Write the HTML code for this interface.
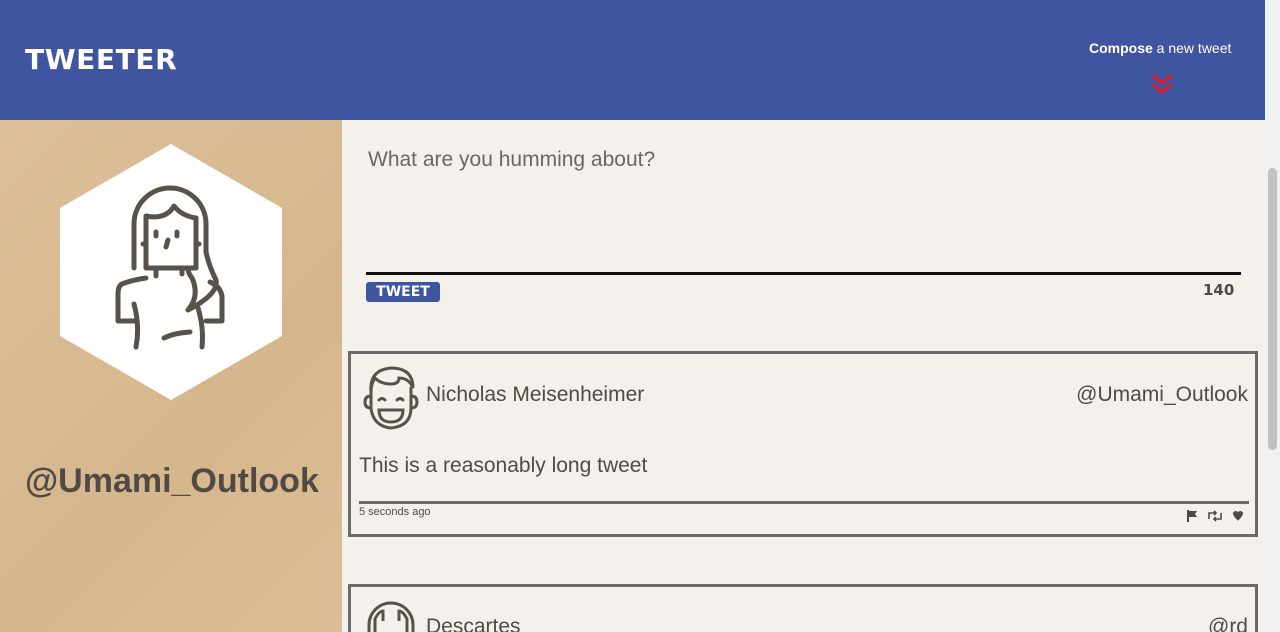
<!DOCTYPE html>
<html><head><meta charset="utf-8"><style>
*{margin:0;padding:0;box-sizing:border-box}
html,body{width:1280px;height:632px;overflow:hidden}
body{background:#f4f1ec;font-family:"Liberation Sans",sans-serif;color:#4f4a44}
#w{position:relative;width:1280px;height:632px;overflow:hidden}
.hdr{position:absolute;left:0;top:0;width:1265px;height:120px;background:#4055a0}
.logo{position:absolute;left:25px;top:43px;color:#fff;font:900 28px "DejaVu Sans",sans-serif;letter-spacing:0.6px}
.comp{position:absolute;left:1089px;top:40px;color:#fff;font-size:14px}
.side{position:absolute;left:0;top:120px;width:342px;height:512px;background:linear-gradient(135deg,#dcc09a,#d6b68c 60%,#dbbe96)}
.handle{position:absolute;left:25px;top:342px;font:bold 34px "Liberation Sans",sans-serif;color:#4f4a44}
.ta{position:absolute;left:368px;top:148px;font-size:21px;color:#6b6660}
.line{position:absolute;left:366px;top:272px;width:875px;height:3px;background:#111}
.btn{position:absolute;left:366px;top:282px;width:74px;height:20px;background:#4055a0;border-radius:3px;color:#fff;font:900 14px "DejaVu Sans",sans-serif;text-align:center;line-height:20px}
.cnt{position:absolute;left:1203px;top:281px;font:900 15px "DejaVu Sans",sans-serif;color:#4f4a44}
.tw{position:absolute;left:348px;width:910px;border:3px solid #6b6b6b}
.name{position:absolute;left:75px;font-size:21px}
.h2{position:absolute;right:7px;font-size:21px}
.sb{position:absolute;left:1265px;top:0;width:15px;height:632px;background:#f1f1f1}
.th{position:absolute;left:1268px;top:168px;width:9px;height:282px;background:#c1c1c1;border-radius:5px}
</style></head><body><div id="w">
<div class="hdr">
<div class="logo">TWEETER</div>
<div class="comp"><b>Compose</b> a new tweet</div>
<svg style="position:absolute;left:1150px;top:72px" width="24" height="26" viewBox="0 0 24 26"><path d="M2 3l10 8 10-8M2 12l10 8 10-8" fill="none" stroke="#e01b24" stroke-width="3"/></svg>
</div>
<div class="side">
<svg style="position:absolute;left:60px;top:24px" width="222" height="256" viewBox="0 0 222 256"><polygon points="111,0 222,64 222,192 111,256 0,192 0,64" fill="#fff"/>
<g fill="none" stroke="#57524b" stroke-width="5" stroke-linecap="round" stroke-linejoin="round">
<path d="M74 124 V80 a36 36 0 0 1 72 0 V108 q3 14 10 28 q3 14 -28 30 q12 -14 4 -32 q-6 -8 -2 -10"/>
<path d="M86 124 V72 q20 4 28 -10 q8 10 22 12 V124 Z"/>
<path d="M86 100 h-3 M136 100 h3"/>
<path d="M96 88 v4 M117 88 v4 M108 96 l-2 7"/>
<path d="M96 124 v8 M122 124 v6"/>
<path d="M86 134 q-14 2 -24 6 q-4 2 -4 10 v27 h16 M74 160 q6 22 2 43"/>
<path d="M150 138 q10 4 12 14 v25 h-16 M138 164 q6 20 4 39"/>
<path d="M104 194 q10 -5 26 -6"/>
</g></svg>
<div class="handle">@Umami_Outlook</div>
</div>
<div class="ta">What are you humming about?</div>
<div class="line"></div>
<div class="btn">TWEET</div>
<div class="cnt">140</div>
<div class="tw" style="top:351px;height:186px">
<svg style="position:absolute;left:10px;top:8px" width="60" height="70" viewBox="0 0 60 70"><g fill="none" stroke="#57524b" stroke-width="3" stroke-linecap="round"><path d="M10 30 q-2 -22 20 -24 q22 0 22 20 q-4 -10 -14 -10 q0 6 -8 6 q-10 0 -16 -6 q-4 6 -4 14"/><path d="M10 26 v20 q2 18 20 20 q20 -2 20 -20 v-20"/><path d="M10 34 q-6 0 -6 6 t6 6 M50 34 q6 0 6 6 t-6 6"/><path d="M18 38 q3 -3 6 0 M36 38 q3 -3 6 0"/><path d="M18 48 h24 q0 12 -12 12 t-12 -12z"/></g></svg>
<div class="name" style="top:29px">Nicholas Meisenheimer</div>
<div class="h2" style="top:29px">@Umami_Outlook</div>
<div style="position:absolute;left:8px;top:100px;font-size:21px">This is a reasonably long tweet</div>
<div style="position:absolute;left:8px;top:147px;width:890px;height:3px;background:#6b6b6b"></div>
<div style="position:absolute;left:8px;top:152px;font-size:11px">5 seconds ago</div>
<svg style="position:absolute;left:834px;top:155px" width="66" height="14" viewBox="0 0 66 14"><g fill="#4f4a44"><path d="M2 1h2v12H2zM4 2h8l-2 3 2 3H4z"/><path d="M48 4a3 3 0 0 1 5-1 3 3 0 0 1 5 1c0 4-5 7-5 8 0-1-5-4-5-8z"/></g><path d="M24 10V4h7M29 2l2 2-2 2M36 4v6h-7M31 12l-2-2 2-2" fill="none" stroke="#4f4a44" stroke-width="1.6"/></svg>
</div>
<div class="tw" style="top:584px;height:80px">
<svg style="position:absolute;left:10px;top:8px" width="60" height="60" viewBox="0 0 60 60"><g fill="none" stroke="#57524b" stroke-width="3"><path d="M8 40 v-10 a22 22 0 0 1 44 0 v10"/><path d="M14 40 v-16 q4 -8 8 -8 v10 M46 40 v-16 q-4 -8 -8 -8 v10"/></g></svg>
<div class="name" style="top:28px">Descartes</div>
<div class="h2" style="top:28px">@rd</div>
</div>
<div class="sb"></div><div class="th"></div>
</div></body></html>
